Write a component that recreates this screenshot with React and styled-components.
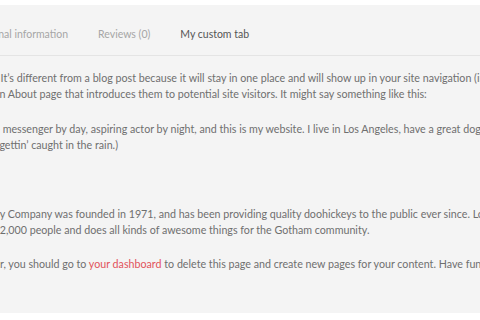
import React from "react"
import styled, { createGlobalStyle } from "styled-components"

const GlobalStyle = createGlobalStyle`
  html, body {
    margin: 0;
    padding: 0;
    background: #ffffff;
  }
  body {
    font-family: Lato, "Noto Sans", sans-serif;
    -webkit-font-smoothing: antialiased;
  }
`

const Page = styled.div`
  width: 480px;
  height: 320px;
  padding-top: 5px;
  box-sizing: border-box;
  overflow: hidden;
`

const Panel = styled.section`
  background: #f4f4f4;
  height: 308px;
  overflow: hidden;
`

const TabBar = styled.div`
  height: 51px;
  box-sizing: border-box;
  border-bottom: 1px solid #e4e4e4;
  overflow: hidden;
`

const TabList = styled.ul`
  display: flex;
  gap: 30px;
  list-style: none;
  margin: 0 0 0 -119px;
  padding: 22px 0 0;
  white-space: nowrap;
`

const Tab = styled.li`
  font-size: 10.5px;
  line-height: 14px;
  color: ${({ active }) => (active ? "#555555" : "#a6a6a6")};
`

const Content = styled.div`
  margin-left: -115px;
  width: 900px;
  padding-top: 14px;
  font-size: 10.7px;
  line-height: 16px;
  color: #6f6f6f;
  white-space: nowrap;
`

const Para = styled.p`
  margin: 0 0 19px;
`

const Quote = styled.blockquote`
  margin: 0 0 18px 27px;
`

const Link = styled.a`
  color: #e2525a;
  text-decoration: none;
`

const App = () => (
  <>
    <GlobalStyle />
    <Page>
      <Panel>
        <TabBar>
          <TabList>
            <Tab>Description</Tab>
            <Tab>Additional information</Tab>
            <Tab>Reviews (0)</Tab>
            <Tab active>My custom tab</Tab>
          </TabList>
        </TabBar>
        <Content>
          <Para>
            This is an example page. It’s different from a blog post because it will stay in one place and will show up in your site navigation (in most themes).
            <br />
            Most people start with an About page that introduces them to potential site visitors. It might say something like this:
          </Para>
          <Quote>
            Hi there! I’m a bike messenger by day, aspiring actor by night, and this is my website. I live in Los Angeles, have a great dog named Jack, and I like
            <br />
            piña coladas. (And gettin’ caught in the rain.)
          </Quote>
          <Para>…or something like this:</Para>
          <Quote>
            The XYZ Doohickey Company was founded in 1971, and has been providing quality doohickeys to the public ever since. Located in Gotham City,
            <br />
            XYZ employs over 2,000 people and does all kinds of awesome things for the Gotham community.
          </Quote>
          <Para>
            As a new WordPress user, you should go to <Link href="#">your dashboard</Link> to delete this page and create new pages for your content. Have fun!
          </Para>
        </Content>
      </Panel>
    </Page>
  </>
)

export default App
